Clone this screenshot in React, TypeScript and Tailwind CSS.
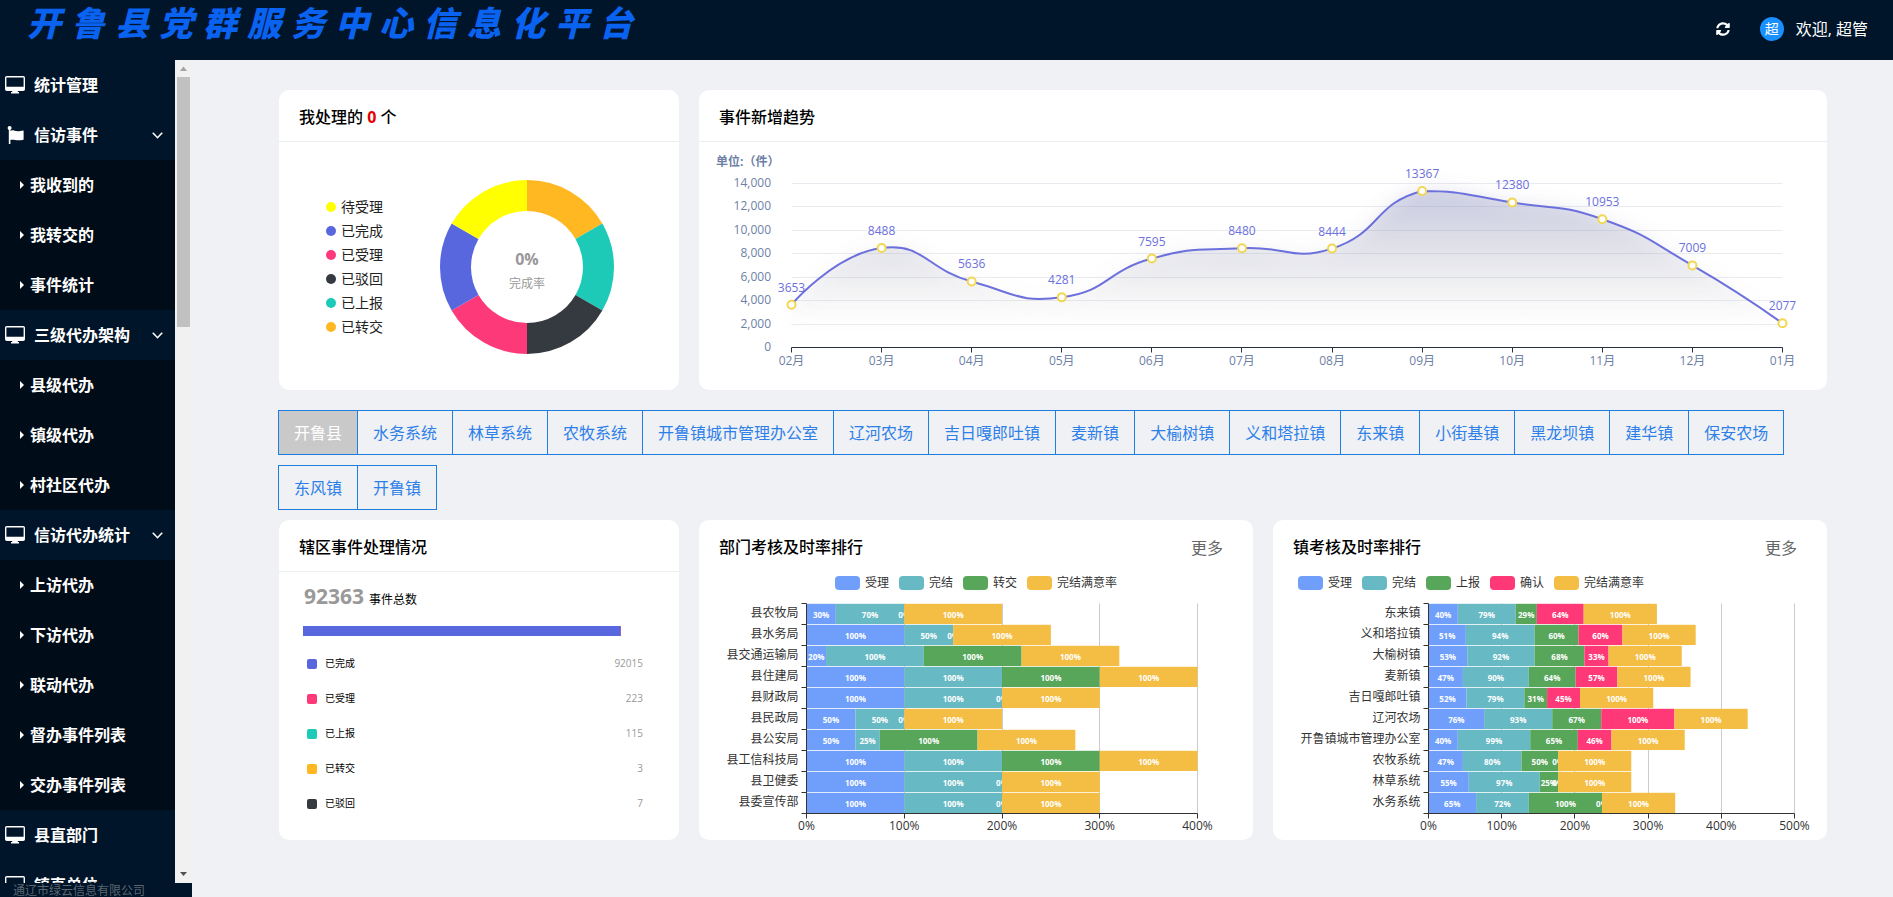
import { useState } from "react";
import { FaSyncAlt } from "react-icons/fa";

interface MenuItem{
    title: string;
    icon: "monitor" | "flag";
    children?: string[];
}

interface Series{
    name: string;
    color: string;
    swatch: string;
    values: number[];
}

interface Point{
    x: number;
    y: number;
}

const PLATFORM_NAME = "开鲁县党群服务中心信息化平台";

const menuItems: MenuItem[] = [
    { title: "统计管理", icon: "monitor" },
    { title: "信访事件", icon: "flag", children: ["我收到的", "我转交的", "事件统计"] },
    { title: "三级代办架构", icon: "monitor", children: ["县级代办", "镇级代办", "村社区代办"] },
    { title: "信访代办统计", icon: "monitor", children: ["上访代办", "下访代办", "联动代办", "督办事件列表", "交办事件列表"] },
    { title: "县直部门", icon: "monitor" },
    { title: "镇直单位", icon: "monitor" },
];

const areas = [
    "开鲁县", "水务系统", "林草系统", "农牧系统", "开鲁镇城市管理办公室", "辽河农场", "吉日嘎郎吐镇", "麦新镇", "大榆树镇",
    "义和塔拉镇", "东来镇", "小街基镇", "黑龙坝镇", "建华镇", "保安农场", "东风镇", "开鲁镇",
];

const handledLegend = [
    { name: "待受理", dot: "bg-[#ffff00]" },
    { name: "已完成", dot: "bg-[#5867dd]" },
    { name: "已受理", dot: "bg-[#fd397a]" },
    { name: "已驳回", dot: "bg-[#343a40]" },
    { name: "已上报", dot: "bg-[#1dc9b7]" },
    { name: "已转交", dot: "bg-[#ffb822]" },
];

// clockwise from twelve o'clock
const donutColors = ["#ffb822", "#1dc9b7", "#343a40", "#fd397a", "#5867dd", "#ffff00"];

const trend = [
    { month: "02月", count: 3653 },
    { month: "03月", count: 8488 },
    { month: "04月", count: 5636 },
    { month: "05月", count: 4281 },
    { month: "06月", count: 7595 },
    { month: "07月", count: 8480 },
    { month: "08月", count: 8444 },
    { month: "09月", count: 13367 },
    { month: "10月", count: 12380 },
    { month: "11月", count: 10953 },
    { month: "12月", count: 7009 },
    { month: "01月", count: 2077 },
];

const areaTotals = [
    { name: "已完成", count: 92015, dot: "bg-[#5867dd]" },
    { name: "已受理", count: 223, dot: "bg-[#fd397a]" },
    { name: "已上报", count: 115, dot: "bg-[#1dc9b7]" },
    { name: "已转交", count: 3, dot: "bg-[#ffb822]" },
    { name: "已驳回", count: 7, dot: "bg-[#343a40]" },
];

const departments = ["县农牧局", "县水务局", "县交通运输局", "县住建局", "县财政局", "县民政局", "县公安局", "县工信科技局", "县卫健委", "县委宣传部"];

const departmentSeries: Series[] = [
    { name: "受理", color: "#6f9ffb", swatch: "bg-[#6f9ffb]", values: [30, 100, 20, 100, 100, 50, 50, 100, 100, 100] },
    { name: "完结", color: "#67b9c4", swatch: "bg-[#67b9c4]", values: [70, 50, 100, 100, 100, 50, 25, 100, 100, 100] },
    { name: "转交", color: "#58a65a", swatch: "bg-[#58a65a]", values: [0, 0, 100, 100, 0, 0, 100, 100, 0, 0] },
    { name: "完结满意率", color: "#f4bd43", swatch: "bg-[#f4bd43]", values: [100, 100, 100, 100, 100, 100, 100, 100, 100, 100] },
];

const towns = ["东来镇", "义和塔拉镇", "大榆树镇", "麦新镇", "吉日嘎郎吐镇", "辽河农场", "开鲁镇城市管理办公室", "农牧系统", "林草系统", "水务系统"];

const townSeries: Series[] = [
    { name: "受理", color: "#6f9ffb", swatch: "bg-[#6f9ffb]", values: [40, 51, 53, 47, 52, 76, 40, 47, 55, 65] },
    { name: "完结", color: "#67b9c4", swatch: "bg-[#67b9c4]", values: [79, 94, 92, 90, 79, 93, 99, 80, 97, 72] },
    { name: "上报", color: "#58a65a", swatch: "bg-[#58a65a]", values: [29, 60, 68, 64, 31, 67, 65, 50, 25, 100] },
    { name: "确认", color: "#ff3977", swatch: "bg-[#ff3977]", values: [64, 60, 33, 57, 45, 100, 46, 0, 0, 0] },
    { name: "完结满意率", color: "#f4bd43", swatch: "bg-[#f4bd43]", values: [100, 100, 100, 100, 100, 100, 100, 100, 100, 100] },
];

const MonitorIcon = () => (
    <svg className="w-5 h-[18px] shrink-0" viewBox="0 0 20 18" fill="#fff" aria-hidden="true">
        <path fillRule="evenodd" d="M1.8 0h16.4A1.8 1.8 0 0 1 20 1.8v11.4a1.8 1.8 0 0 1-1.8 1.8h-5.4v1h1.2v1.5H6V16h1.2v-1H1.8A1.8 1.8 0 0 1 0 13.2V1.8A1.8 1.8 0 0 1 1.8 0zM1.4 1.4v9.4h17.2V1.4z" />
    </svg>
);

const FlagIcon = () => (
    <svg className="w-5 h-[18px] shrink-0" viewBox="0 0 20 18" fill="#fff" aria-hidden="true">
        <circle cx="4.6" cy="2" r="2" />
        <path d="M3.8 2h1.6v16H3.800z" />
        <path d="M5 5c1.500-.9 3-.8 4.600-.2 2 .7 4.400.6 9-.2v9.200c-3.600.7-6.200.6-8.600.2-1.800-.3-3.400-.3-5 0z" />
    </svg>
);

const Sidebar = () => {
    const [closedMenus, setClosedMenus] = useState<string[]>([]);

    const toggleMenu = (title: string) => {
        setClosedMenus((prev) => (
            prev.includes(title) ? prev.filter((item) => item !== title) : [...prev, title]
        ));
    };

    return(
        <aside className="flex flex-col w-48 shrink-0 bg-[#001529]">
            <div className="flex flex-1 min-h-0">
                <nav className="flex-1 overflow-hidden text-base font-bold text-white">
                    <ul>
                        {menuItems.map((item) => (
                            <li key={item.title}>
                                <button
                                    type="button"
                                    className="flex items-center w-full h-[50px] pl-[5px] pr-3"
                                    onClick={() => item.children && toggleMenu(item.title)}
                                >
                                    {item.icon === "flag" ? <FlagIcon /> : <MonitorIcon />}
                                    <span className="ml-[9px] whitespace-nowrap">{item.title}</span>

                                    {item.children && (
                                        <svg className="ml-auto w-[11px] h-[7px]" viewBox="0 0 11 7" fill="none" stroke="#fff" strokeWidth="1.6" aria-hidden="true">
                                            <path d="M.8.8l4.7 4.9L10.2.8" />
                                        </svg>
                                    )}
                                </button>

                                {item.children && !closedMenus.includes(item.title) && (
                                    <ul className="bg-[#000c17]">
                                        {item.children.map((child) => (
                                            <li key={child}>
                                                <a href="#" className="flex items-center h-[50px] pl-5">
                                                    <svg className="w-1 h-2 shrink-0" viewBox="0 0 4 8" fill="#fff" aria-hidden="true">
                                                        <path d="M0 0l4 4-4 4z" />
                                                    </svg>
                                                    <span className="ml-[6px]">{child}</span>
                                                </a>
                                            </li>
                                        ))}
                                    </ul>
                                )}
                            </li>
                        ))}
                    </ul>
                </nav>

                <div className="flex flex-col items-center w-[17px] bg-[#f1f1f1]" aria-hidden="true">
                    <svg className="w-[17px] h-[17px] shrink-0" viewBox="0 0 17 17" fill="#a3a3a3">
                        <path d="M5 11l3.5-4.5L12 11z" />
                    </svg>
                    <div className="w-[13px] h-[250px] bg-[#c1c1c1]"></div>
                    <svg className="mt-auto w-[17px] h-[17px] shrink-0" viewBox="0 0 17 17" fill="#505050">
                        <path d="M5 6l3.5 4L12 6z" />
                    </svg>
                </div>
            </div>

            <footer className="h-[14px] pl-[13px] text-xs text-[#5c6570] whitespace-nowrap overflow-hidden">
                通辽市绿云信息有限公司
            </footer>
        </aside>
    );
};

interface CardProps{
    title: React.ReactNode;
    bordered?: boolean;
    more?: boolean;
    className?: string;
    children: React.ReactNode;
}

const Card: React.FC<CardProps> = ({ title, bordered = false, more = false, className = "", children }) => (
    <section className={`flex flex-col bg-white rounded-[10px] ${className}`}>
        <div className={`flex justify-between items-center h-[52px] pt-[2px] pl-5 pr-[30px] ${bordered ? "border-b border-[#ebedf2]" : ""}`}>
            <h2 className="text-base font-medium text-black">{title}</h2>
            {more && <a href="#" className="pt-[2px] text-base text-[#666]">更多</a>}
        </div>
        {children}
    </section>
);

const HandledDonut = () => {
    const outer = 87;
    const inner = 56;

    const slicePath = (index: number) => {
        const start = (index * Math.PI) / 3;
        const end = ((index + 1) * Math.PI) / 3;
        const at = (radius: number, angle: number) => `${88 + radius * Math.sin(angle)} ${88 - radius * Math.cos(angle)}`;

        return `M${at(outer, start)}A${outer} ${outer} 0 0 1 ${at(outer, end)}L${at(inner, end)}A${inner} ${inner} 0 0 0 ${at(inner, start)}Z`;
    };

    return(
        <svg className="w-44 h-44" viewBox="0 0 176 176" role="img" aria-label="完成率">
            {donutColors.map((color, index) => (
                <path key={color} d={slicePath(index)} fill={color} />
            ))}
            <text x="88" y="86" textAnchor="middle" fontSize="16" fontWeight="700" fill="#999">0%</text>
            <text x="88" y="109" textAnchor="middle" fontSize="12" fill="#999">完成率</text>
        </svg>
    );
};

const TREND_LEFT = 92.5;
const TREND_RIGHT = 1083.5;
const TREND_TOP = 41.5;
const TREND_BOTTOM = 205.5;

const trendY = (value: number) => TREND_BOTTOM - ((TREND_BOTTOM - TREND_TOP) * value) / 14000;

// cubic curve whose tangent in each point runs parallel to its two neighbours,
// kept between the highest and the lowest value
const smoothPath = (points: Point[]) => {
    const minY = Math.min(...points.map((point) => point.y));
    const maxY = Math.max(...points.map((point) => point.y));
    const clamp = (y: number) => Math.min(maxY, Math.max(minY, y));

    let path = `M${points[0].x} ${points[0].y}`;
    let control = points[0];

    for(let i = 1; i < points.length; i++)
    {
        const prev = points[i - 1];
        const current = points[i];
        const next = points[i + 1];
        let before = current;
        let after = current;

        if(next){
            const lenPrev = Math.hypot(current.x - prev.x, current.y - prev.y);
            const lenNext = Math.hypot(next.x - current.x, next.y - current.y);
            const ratio = lenNext / (lenNext + lenPrev);
            const vx = next.x - prev.x;
            const vy = next.y - prev.y;

            before = { x: current.x - vx * 0.5 * (1 - ratio), y: clamp(current.y - vy * 0.5 * (1 - ratio)) };
            after = { x: current.x + vx * 0.5 * ratio, y: clamp(current.y + vy * 0.5 * ratio) };
        }

        path += `C${control.x} ${control.y} ${before.x} ${before.y} ${current.x} ${current.y}`;
        control = after;
    }

    return path;
};

const TrendChart = () => {
    const step = (TREND_RIGHT - TREND_LEFT) / (trend.length - 1);
    const points = trend.map((item, index) => ({ x: TREND_LEFT + step * index, y: trendY(item.count) }));
    const line = smoothPath(points);
    const area = `${line}L${TREND_RIGHT} ${TREND_BOTTOM}L${TREND_LEFT} ${TREND_BOTTOM}Z`;

    return(
        <svg className="w-full h-auto" viewBox="0 0 1128 248" fontSize="12" role="img" aria-label="事件新增趋势">
            <defs>
                <linearGradient id="trendFill" gradientUnits="userSpaceOnUse" x1="0" y1="48" x2="0" y2="182">
                    <stop offset="0" stopColor="#7d82b8" stopOpacity="0.25" />
                    <stop offset="0.5" stopColor="#8a8caa" stopOpacity="0.12" />
                    <stop offset="1" stopColor="#999999" stopOpacity="0" />
                </linearGradient>
                <filter id="trendGlow" x="-5%" y="-20%" width="110%" height="140%">
                    <feGaussianBlur stdDeviation="9" />
                </filter>
            </defs>

            <text x="17" y="24" fontWeight="700" fill="#6e7fa6">单位:（件）</text>

            {[0, 2000, 4000, 6000, 8000, 10000, 12000, 14000].map((value) => (
                <g key={value}>
                    {value > 0 && (
                        <line x1={TREND_LEFT} x2={TREND_RIGHT} y1={Math.floor(trendY(value)) + 0.5} y2={Math.floor(trendY(value)) + 0.5} stroke="#e9ebf0" />
                    )}
                    <text x="72" y={trendY(value) + 3.5} textAnchor="end" fill="#6e7fa6">{value.toLocaleString("en-US")}</text>
                </g>
            ))}

            <path d={area} fill="url(#trendFill)" filter="url(#trendGlow)" />
            <path d={area} fill="url(#trendFill)" />
            <line x1={TREND_LEFT} x2={TREND_RIGHT} y1={TREND_BOTTOM} y2={TREND_BOTTOM} stroke="#283142" />
            <path d={line} fill="none" stroke="#6c70dc" strokeWidth="2" />

            {points.map((point, index) => (
                <g key={trend[index].month}>
                    <line x1={Math.floor(point.x) + 0.5} x2={Math.floor(point.x) + 0.5} y1={TREND_BOTTOM} y2={TREND_BOTTOM + 5} stroke="#283142" />
                    <text x={point.x} y="223" textAnchor="middle" fill="#6e7fa6">{trend[index].month}</text>
                    <circle cx={point.x} cy={point.y} r="4" fill="#fff" stroke="#f2d750" strokeWidth="2" />
                    <text x={point.x} y={point.y - 13} textAnchor="middle" fill="#6c70dc">{trend[index].count}</text>
                </g>
            ))}
        </svg>
    );
};

interface RankChartProps{
    label: string;
    categories: string[];
    series: Series[];
    axisLeft: number;
    axisRight: number;
    max: number;
    legendClassName: string;
}

const RANK_TOP = 13.5;
const ROW_HEIGHT = 21;

const RankChart: React.FC<RankChartProps> = ({ label, categories, series, axisLeft, axisRight, max, legendClassName }) => {
    const scale = (axisRight - axisLeft) / max;
    const bottom = RANK_TOP + ROW_HEIGHT * categories.length;
    const ticks = Array.from({ length: max / 100 + 1 }, (_, index) => index * 100);
    const rows = categories.map((_, index) => RANK_TOP + ROW_HEIGHT * index);

    const startOf = (seriesIndex: number, row: number) => (
        series.slice(0, seriesIndex).reduce((sum, item) => sum + item.values[row], 0)
    );

    return(
        <>
            <ul className={`flex gap-[10px] mt-1 ${legendClassName}`}>
                {series.map((item) => (
                    <li key={item.name} className="flex items-center gap-[5px] text-xs/[14px] text-[#333]">
                        <span className={`w-[25px] h-[14px] rounded-[4px] ${item.swatch}`}></span>
                        {item.name}
                    </li>
                ))}
            </ul>

            <svg className="w-full h-auto" viewBox="0 0 554 250" fontSize="12" role="img" aria-label={label}>
                {ticks.slice(1).map((tick) => (
                    <line key={tick} x1={Math.floor(axisLeft + tick * scale) + 0.5} x2={Math.floor(axisLeft + tick * scale) + 0.5} y1={RANK_TOP} y2={bottom} stroke="#ccc" />
                ))}

                {series.map((item, seriesIndex) => (
                    <g key={item.name}>
                        {rows.map((y, row) => (
                            <rect key={row} x={axisLeft + startOf(seriesIndex, row) * scale} y={y + 0.3} width={item.values[row] * scale} height="20.2" fill={item.color} />
                        ))}
                        {rows.map((y, row) => (
                            <text
                                key={row}
                                x={axisLeft + (startOf(seriesIndex, row) + item.values[row] / 2) * scale}
                                y={y + 14}
                                textAnchor="middle"
                                fontSize="8"
                                fontWeight="700"
                                fill="#fff"
                            >
                                {`${item.values[row]}%`}
                            </text>
                        ))}
                    </g>
                ))}

                {rows.map((y, row) => (
                    <g key={categories[row]}>
                        <line x1={axisLeft - 5} x2={axisLeft} y1={y} y2={y} stroke="#333" />
                        <text x={axisLeft - 8} y={y + 13} textAnchor="end" fill="#333">{categories[row]}</text>
                    </g>
                ))}

                <path d={`M${axisLeft} ${RANK_TOP}V${bottom}M${axisLeft - 5} ${bottom}H${axisRight}`} stroke="#333" />

                {ticks.map((tick) => (
                    <g key={tick}>
                        <line x1={Math.floor(axisLeft + tick * scale) + 0.5} x2={Math.floor(axisLeft + tick * scale) + 0.5} y1={bottom} y2={bottom + 5} stroke="#333" />
                        <text x={axisLeft + tick * scale} y={bottom + 16} textAnchor="middle" fill="#333">{`${tick}%`}</text>
                    </g>
                ))}
            </svg>
        </>
    );
};

const App = () => {
    const [activeArea, setActiveArea] = useState<string>("开鲁县");

    return(
        <div className="flex flex-col h-screen overflow-hidden bg-[#f0f1f5] font-['Open_Sans','Noto_Sans_CJK_SC',sans-serif]">
            <header className="flex justify-between h-[60px] shrink-0 pl-[27px] pr-[25px] bg-[#001529]">
                <h1>
                    <svg className="w-[620px] h-12" viewBox="0 0 620 48" aria-label={PLATFORM_NAME}>
                        <text
                            x={PLATFORM_NAME.split("").map((_, index) => index * 44).join(" ")}
                            y="36"
                            fontSize="34"
                            fontWeight="900"
                            fontStyle="italic"
                            fill="#0a63f0"
                        >
                            {PLATFORM_NAME}
                        </text>
                    </svg>
                </h1>

                <div className="flex items-center h-[57px] text-base text-white">
                    <button type="button" aria-label="刷新">
                        <FaSyncAlt className="size-[14px]" />
                    </button>
                    <span className="flex justify-center items-center size-6 ml-[30px] mr-3 rounded-full bg-[#1890ff] text-sm">超</span>
                    <span>欢迎, 超管</span>
                </div>
            </header>

            <div className="flex flex-1 min-h-0">
                <Sidebar />

                <main className="flex-1 min-w-0 pt-[30px] pl-[87px] pr-[66px] overflow-hidden">
                    <div className="flex gap-5">
                        <Card bordered className="w-[400px] shrink-0" title={<>我处理的 <span className="font-bold text-[#e60000]">0</span> 个</>}>
                            <div className="flex flex-1 items-center pt-[2px] pl-[47px]">
                                <ul className="mr-14">
                                    {handledLegend.map((item) => (
                                        <li key={item.name} className="flex items-center gap-[5px] h-6 text-sm text-[#222]">
                                            <span className={`size-[10px] rounded-full ${item.dot}`}></span>
                                            {item.name}
                                        </li>
                                    ))}
                                </ul>
                                <HandledDonut />
                            </div>
                        </Card>

                        <Card bordered className="flex-1 min-w-0" title="事件新增趋势">
                            <TrendChart />
                        </Card>
                    </div>

                    <div className="flex flex-wrap gap-y-[10px] mt-5 mb-[10px]">
                        {areas.map((area) => (
                            <button
                                key={area}
                                type="button"
                                onClick={() => setActiveArea(area)}
                                className={`h-[45px] px-[15px] -ml-px border border-[#1f7fe0] text-base ${area === activeArea ? "bg-[#c9c9c9] text-white" : "text-[#2d80e8]"}`}
                            >
                                {area}
                            </button>
                        ))}
                    </div>

                    <div className="flex gap-5">
                        <Card bordered className="w-[400px] shrink-0" title="辖区事件处理情况">
                            <p className="flex items-baseline gap-[5px] mt-2 pl-[25px] text-xs text-black">
                                <strong className="text-[21px] leading-8 font-bold text-[#999]">92363</strong>
                                事件总数
                            </p>
                            <div className="flex w-[318px] h-[10px] ml-6 mt-[14px] bg-[#5867dd]">
                                <span className="w-px h-full ml-auto bg-[#9a62bb]"></span>
                            </div>
                            <ul className="mt-[10px] pl-7 pr-9">
                                {areaTotals.map((item) => (
                                    <li key={item.name} className="flex items-center h-[35px] text-[10px] text-black">
                                        <span className={`size-[10px] mr-2 rounded-[2px] ${item.dot}`}></span>
                                        {item.name}
                                        <span className="ml-auto text-[#999]">{item.count}</span>
                                    </li>
                                ))}
                            </ul>
                        </Card>

                        <Card more className="flex-1 min-w-0" title="部门考核及时率排行">
                            <RankChart
                                label="部门考核及时率排行"
                                categories={departments}
                                series={departmentSeries}
                                axisLeft={107.5}
                                axisRight={498.5}
                                max={400}
                                legendClassName="justify-center"
                            />
                        </Card>

                        <Card more className="flex-1 min-w-0" title="镇考核及时率排行">
                            <RankChart
                                label="镇考核及时率排行"
                                categories={towns}
                                series={townSeries}
                                axisLeft={155.5}
                                axisRight={521.5}
                                max={500}
                                legendClassName="pl-[25px]"
                            />
                        </Card>
                    </div>
                </main>
            </div>
        </div>
    );
};

export default App;
